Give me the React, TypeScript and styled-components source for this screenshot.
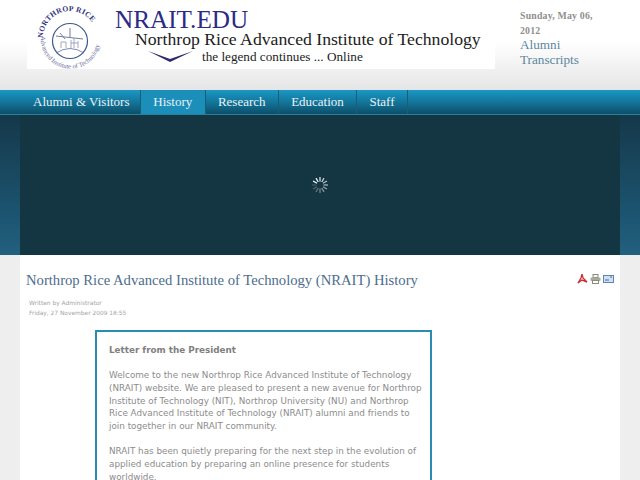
import React from 'react';
import styled, { createGlobalStyle } from 'styled-components';

const GlobalStyle = createGlobalStyle`
    html, body {
        margin: 0;
        padding: 0;
        height: 480px;
        overflow: hidden;
        background: #eeeeee;
    }
`;

const Page = styled.div`
    width: 640px;
    height: 480px;
    overflow: hidden;
    font-family: "Liberation Serif", serif;
`;

const Header = styled.header`
    height: 90px;
    padding-left: 27px;
    display: flex;
    align-items: flex-start;
    box-sizing: border-box;
    background: linear-gradient(to bottom, #ffffff 0, #ffffff 42px, #e5e5e7 90px);
`;

const Banner = styled.div`
    width: 468px;
    height: 69px;
    background: #ffffff;
    display: flex;
    flex: none;
`;

const Seal = styled.svg`
    width: 72px;
    height: 69px;
    margin-left: 9px;
    flex: none;
`;

const BannerText = styled.div`
    margin-left: 7px;
    padding-top: 10px;
`;

const SiteName = styled.div`
    color: #2b2b86;
    font-size: 25.2px;
    line-height: 20px;
`;

const FullName = styled.div`
    color: #1c1c1c;
    font-size: 17.7px;
    line-height: 18px;
    margin-left: 20px;
    white-space: nowrap;
`;

const TaglineRow = styled.div`
    display: flex;
    align-items: center;
    margin: 1px 0 0 33px;
`;

const Swoosh = styled.svg`
    width: 46px;
    height: 12px;
    flex: none;
`;

const Tagline = styled.div`
    color: #222222;
    font-size: 13.2px;
    line-height: 15px;
    margin-left: 8px;
    white-space: nowrap;
`;

const SideInfo = styled.div`
    margin-left: 25px;
    padding-top: 8px;
    width: 95px;
`;

const DateText = styled.div`
    color: #8f8f8f;
    font-size: 9.8px;
    font-weight: bold;
    line-height: 15px;
    letter-spacing: 0.2px;
    width: 80px;
`;

const SideLink = styled.a`
    display: block;
    color: #5b86a0;
    font-size: 13.2px;
    line-height: 15px;
    position: relative;
    top: -1px;
`;

const Nav = styled.nav`
    height: 24px;
    padding-left: 15px;
    display: flex;
    background: linear-gradient(to bottom, #1b98c4 0, #14799f 45%, #0d4f68 100%);
    border-bottom: 1px solid #2a7f9f;
`;

const NavItem = styled.a<{ $active?: boolean }>`
    padding: 0 12.3px;
    display: flex;
    align-items: center;
    color: #e8f2f6;
    font-size: 13px;
    border-right: 1px solid #155f7b;
    background: ${(p) => (p.$active ? '#1b8fb9' : 'transparent')};
    &:first-child {
        padding: 0 10.5px 0 18px;
    }
`;

const Hero = styled.section`
    height: 140px;
    padding: 0 20px;
    background: linear-gradient(to bottom, #15384a 0, #1c5470 70%, #22607e 100%);
`;

const Slide = styled.div`
    height: 100%;
    background: #143542;
    display: flex;
    align-items: center;
    justify-content: center;
`;

const Spinner = styled.svg`
    width: 18px;
    height: 18px;
    margin-top: -1px;
`;

const Content = styled.main`
    margin: 0 20px;
    padding: 15px 6px 0;
    height: 225px;
    background: #ffffff;
    box-sizing: border-box;
`;

const TitleRow = styled.div`
    display: flex;
    align-items: flex-start;
    justify-content: space-between;
`;

const Title = styled.h1`
    margin: 0;
    color: #4c6c8e;
    font-size: 14.65px;
    font-weight: normal;
    line-height: 20px;
    white-space: nowrap;
`;

const Tools = styled.div`
    display: flex;
    gap: 2px;
    margin-top: 4px;
`;

const ToolIcon = styled.svg`
    width: 11px;
    height: 10px;
`;

const Meta = styled.div`
    margin: 9px 0 0 3px;
    color: #a4a4a4;
    font-family: "DejaVu Sans", sans-serif;
    font-size: 5.9px;
    line-height: 9.5px;
`;

const LetterBox = styled.div`
    margin: 12px 0 0 69px;
    width: 337px;
    height: 180px;
    box-sizing: border-box;
    padding: 12px 0 0 12px;
    border: 2px solid #2c8bb0;
    border-bottom: none;
    color: #8c8c8c;
    font-family: "DejaVu Sans", sans-serif;
    font-size: 8.8px;
    line-height: 12.65px;
`;

const LetterHeading = styled.div`
    color: #808080;
    font-weight: bold;
    margin-bottom: 12.65px;
`;

const Paragraph = styled.p`
    margin: 0 0 12.65px;
    width: 316px;
`;

const navLinks = ['Alumni & Visitors', 'History', 'Research', 'Education', 'Staff'];

function SealLogo() {
    return (
        <Seal viewBox="0 0 72 69">
            <defs>
                <path id="sealTop" d="M 7 38 A 27 27 0 0 1 61 38" />
                <path id="sealBottom" d="M 5 36 A 29 29 0 0 0 64 42" />
            </defs>
            <text fontFamily="Liberation Serif, serif" fontSize="7.6" fontWeight="bold" fill="#33337f" letterSpacing="0.3">
                <textPath href="#sealTop">NORTHROP RICE</textPath>
            </text>
            <text fontFamily="Liberation Serif, serif" fontSize="6.6" fill="#6b6b9a">
                <textPath href="#sealBottom">Advanced Institute of Technology</textPath>
            </text>
            <circle cx="34" cy="41" r="17.5" fill="#fff" stroke="#3d5a8c" strokeWidth="1.2" />
            <path d="M 20 53 Q 34 44 48 53" fill="none" stroke="#5a6f9c" strokeWidth="0.8" />
            <path d="M 20 36 L 47 39 M 24 33 L 29 39 M 34 28 L 34 37" stroke="#6d7fa3" strokeWidth="1" fill="none" />
            <path d="M 25 48 V 42 H 30 V 48 M 35 48 V 40 M 38 48 V 38 M 35 43 H 42 M 42 48 V 41" stroke="#8a94ad" strokeWidth="0.8" fill="none" />
        </Seal>
    );
}

function SpinnerIcon() {
    const spokes = Array.from({ length: 12 }, (_, i) => i);
    return (
        <Spinner viewBox="-9 -9 18 18">
            {spokes.map((i) => (
                <line
                    key={i}
                    x1="0"
                    y1="-3.5"
                    x2="0"
                    y2="-8"
                    stroke="#ffffff"
                    strokeWidth="1.3"
                    opacity={1 - ((i + 1) % 12) * 0.075}
                    transform={`rotate(${i * 30 - 30})`}
                />
            ))}
        </Spinner>
    );
}

export default function App() {
    return (
        <Page>
            <GlobalStyle />
            <Header>
                <Banner>
                    <SealLogo />
                    <BannerText>
                        <SiteName>NRAIT.EDU</SiteName>
                        <FullName>Northrop Rice Advanced Institute of Technology</FullName>
                        <TaglineRow>
                            <Swoosh viewBox="0 0 46 12">
                                <path d="M 0 0 L 22 11 L 45 0 L 22 8 Z" fill="#2b2b6e" />
                            </Swoosh>
                            <Tagline>the legend continues ... Online</Tagline>
                        </TaglineRow>
                    </BannerText>
                </Banner>
                <SideInfo>
                    <DateText>Sunday, May 06, 2012</DateText>
                    <SideLink>Alumni</SideLink>
                    <SideLink>Transcripts</SideLink>
                </SideInfo>
            </Header>
            <Nav>
                {navLinks.map((link) => (
                    <NavItem key={link} $active={link === 'History'}>{link}</NavItem>
                ))}
            </Nav>
            <Hero>
                <Slide>
                    <SpinnerIcon />
                </Slide>
            </Hero>
            <Content>
                <TitleRow>
                    <Title>Northrop Rice Advanced Institute of Technology (NRAIT) History</Title>
                    <Tools>
                        <ToolIcon viewBox="0 0 11 10">
                            <path d="M 5 0 L 6 4 L 10 8 L 5 6 L 1 9 L 4 4 Z" fill="none" stroke="#c8343c" strokeWidth="1.4" />
                        </ToolIcon>
                        <ToolIcon viewBox="0 0 11 10">
                            <rect x="3" y="0.5" width="5" height="3" fill="#f4f4f0" stroke="#8a8a80" />
                            <rect x="0.5" y="3.5" width="10" height="3.5" rx="1" fill="#a9a995" />
                            <rect x="2.5" y="6.5" width="6" height="3" fill="#fff" stroke="#8a8a80" />
                        </ToolIcon>
                        <ToolIcon viewBox="0 0 11 10">
                            <rect x="0.5" y="1.5" width="10" height="7" fill="#cfe0f2" stroke="#5f86b0" />
                            <path d="M 2 6 H 6 M 7 3 H 9" stroke="#3f6fa8" strokeWidth="1" />
                        </ToolIcon>
                    </Tools>
                </TitleRow>
                <Meta>
                    Written by Administrator<br />
                    Friday, 27 November 2009 18:55
                </Meta>
                <LetterBox>
                    <LetterHeading>Letter from the President</LetterHeading>
                    <Paragraph>
                        Welcome to the new Northrop Rice Advanced Institute of Technology (NRAIT) website. We are pleased to present a new avenue for Northrop Institute of Technology (NIT), Northrop University (NU) and Northrop Rice Advanced Institute of Technology (NRAIT) alumni and friends to join together in our NRAIT community.
                    </Paragraph>
                    <Paragraph>
                        NRAIT has been quietly preparing for the next step in the evolution of applied education by preparing an online presence for students worldwide.
                    </Paragraph>
                </LetterBox>
            </Content>
        </Page>
    );
}
